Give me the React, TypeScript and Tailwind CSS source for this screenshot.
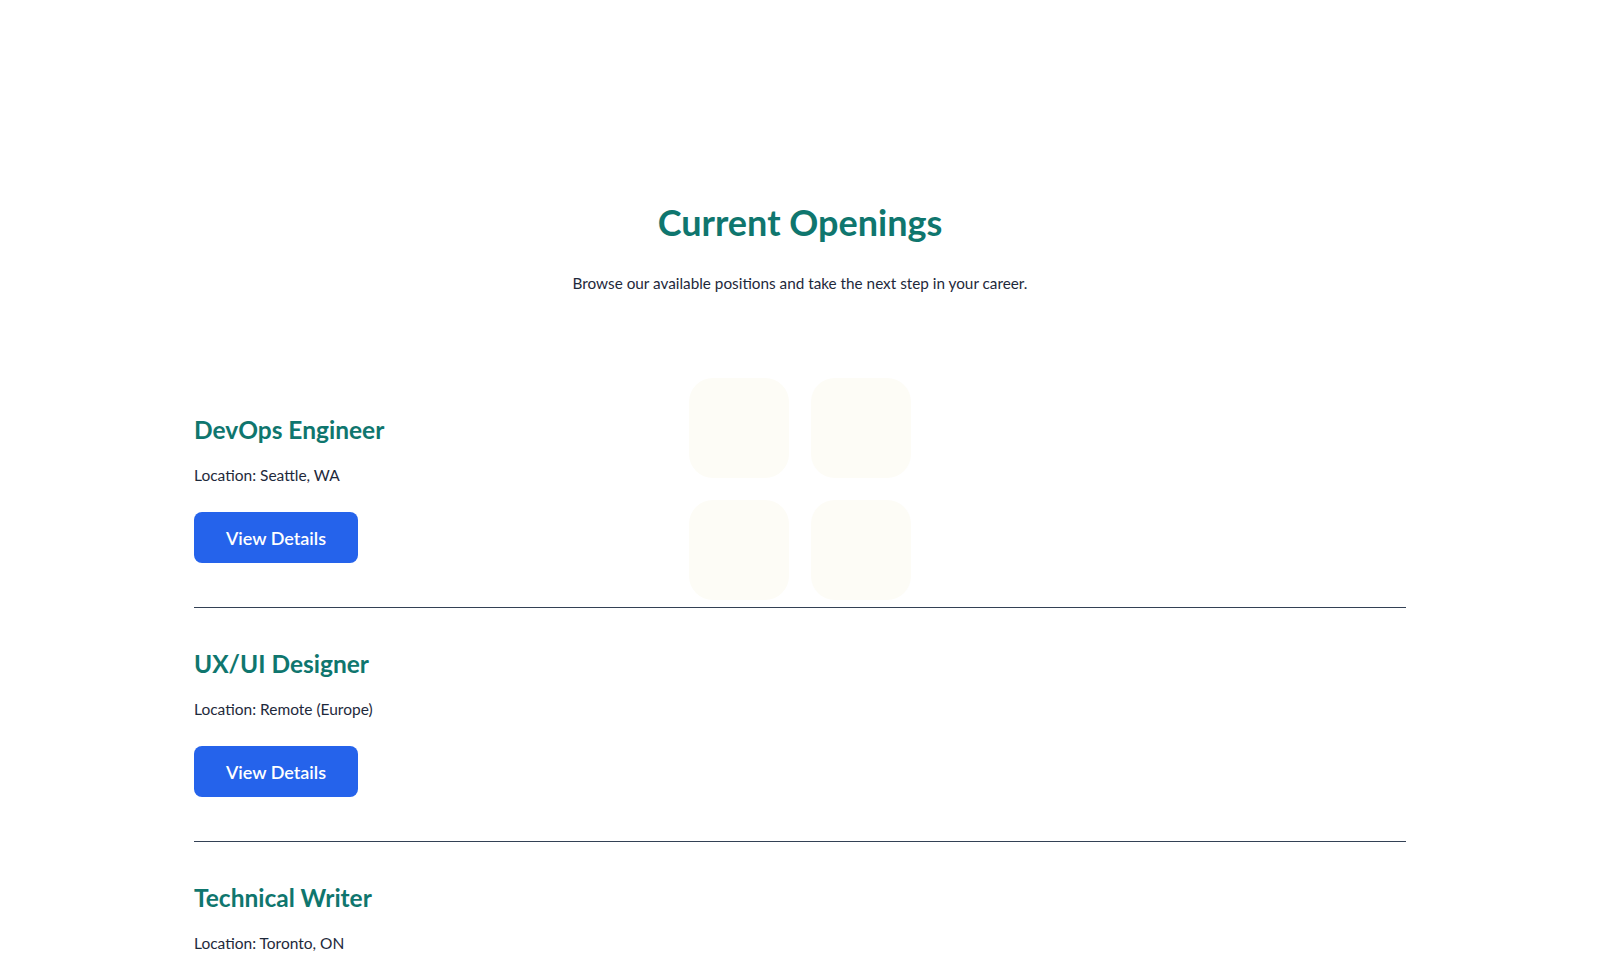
const jobs = [
  { title: 'DevOps Engineer', location: 'Seattle, WA' },
  { title: 'UX/UI Designer', location: 'Remote (Europe)' },
  { title: 'Technical Writer', location: 'Toronto, ON' },
]

export default function App() {
  return (
    <main className="min-h-screen bg-white font-['Lato',sans-serif] text-[#1e293b]">
      <section className="relative pt-[202px] pb-20">
        {/* faint decorative tiles */}
        <div className="pointer-events-none absolute left-1/2 top-[378px] grid -translate-x-1/2 grid-cols-2 gap-[22px]">
          <div className="h-[100px] w-[100px] rounded-3xl bg-[#fdfcf6]" />
          <div className="h-[100px] w-[100px] rounded-3xl bg-[#fdfcf6]" />
          <div className="h-[100px] w-[100px] rounded-3xl bg-[#fdfcf6]" />
          <div className="h-[100px] w-[100px] rounded-3xl bg-[#fdfcf6]" />
        </div>

        <div className="relative mx-auto max-w-[1212px]">
          <h2 className="text-center text-4xl font-bold text-[#0f766e]">Current Openings</h2>
          <p className="mt-[30px] text-center text-[15.3px] leading-[22px]">
            Browse our available positions and take the next step in your career.
          </p>

          <ul className="mt-[80px]">
            {jobs.map((job, i) => (
              <li
                key={job.title}
                className={i < jobs.length - 1 ? 'border-b border-[#334155] pt-10 pb-[44px]' : 'pt-10 pb-[44px]'}
              >
                <h3 className="text-[24.5px] leading-8 font-bold text-[#0f766e]">{job.title}</h3>
                <p className="mt-[18px] text-[15.5px] leading-[22px]">Location: {job.location}</p>
                <button
                  type="button"
                  className="mt-[26px] h-[51px] w-[164px] rounded-lg bg-[#2563eb] text-lg font-semibold text-white"
                >
                  View Details
                </button>
              </li>
            ))}
          </ul>
        </div>
      </section>
    </main>
  )
}
